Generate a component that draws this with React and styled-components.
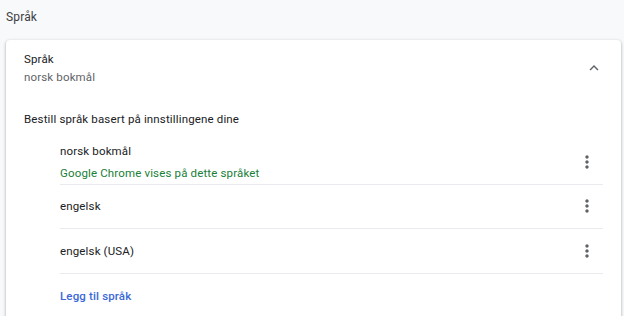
import React from 'react'
import styled, {createGlobalStyle} from 'styled-components'

const GlobalStyle = createGlobalStyle`
    html, body {
        margin: 0;
        padding: 0;
        background-color: #f8f9fa;
        font-family: Roboto, "Liberation Sans", sans-serif;
        font-size: 11.5px;
        letter-spacing: 0.15px;
        color: #202124;
        overflow: hidden;
    }
`

const Page = styled.div`
    width: 624px;
    height: 316px;
    padding: 0 3px 0 6px;
    box-sizing: border-box;
`

const PageTitle = styled.h2`
    margin: 0;
    height: 40px;
    display: flex;
    align-items: center;
    padding-bottom: 6px;
    box-sizing: border-box;
    font-size: 12px;
    font-weight: 400;
    color: #3c4043;
`

const Card = styled.div`
    background-color: #fff;
    border-radius: 4px;
    box-shadow: 0 1px 2px rgba(60, 64, 67, 0.3), 0 1px 3px 1px rgba(60, 64, 67, 0.15);
    padding-bottom: 20px;
`

const Header = styled.div`
    display: flex;
    align-items: center;
    height: 56px;
    padding: 0 13px 0 18px;
`

const HeaderText = styled.div`
    flex: 1;
    display: flex;
    flex-direction: column;
    gap: 4px;
`

const Secondary = styled.span`
    color: #5f6368;
`

const IconButton = styled.button`
    width: ${(p) => p.size || 28}px;
    height: 28px;
    border: none;
    background: none;
    padding: 0;
    display: flex;
    align-items: center;
    justify-content: center;
    color: #5f6368;
    cursor: pointer;
`

const SectionLabel = styled.div`
    padding: 8px 18px 0;
    height: 30px;
    display: flex;
    align-items: center;
    box-sizing: content-box;
`

const List = styled.div`
    margin: 6px 18px 0 54px;
`

const Row = styled.div`
    display: flex;
    align-items: center;
    min-height: 43.5px;
    border-bottom: 1px solid #e8eaed;
`

const RowText = styled.div`
    flex: 1;
    display: flex;
    flex-direction: column;
    gap: 8px;
`

const Note = styled.span`
    color: #188038;
`

const AddLink = styled.a`
    display: block;
    padding-top: 15px;
    font-weight: 500;
    color: #3b68d9;
    text-decoration: none;
`

const Chevron = () => (
    <svg width="18" height="18" viewBox="0 0 24 24" fill="currentColor">
        <path d="M7.41 15.41L12 10.83l4.59 4.58L18 14l-6-6-6 6z" />
    </svg>
)

const Kebab = () => (
    <svg width="20" height="20" viewBox="0 0 24 24" fill="currentColor">
        <path d="M12 8c1.1 0 2-.9 2-2s-.9-2-2-2-2 .9-2 2 .9 2 2 2zm0 2c-1.1 0-2 .9-2 2s.9 2 2 2 2-.9 2-2-.9-2-2-2zm0 6c-1.1 0-2 .9-2 2s.9 2 2 2 2-.9 2-2-.9-2-2-2z" />
    </svg>
)

const languages = [
    {name: 'norsk bokmål', note: 'Google Chrome vises på dette språket'},
    {name: 'engelsk'},
    {name: 'engelsk (USA)'},
]

const App = () => {
    return (
        <Page>
            <GlobalStyle />
            <PageTitle>Språk</PageTitle>
            <Card>
                <Header>
                    <HeaderText>
                        <span>Språk</span>
                        <Secondary>norsk bokmål</Secondary>
                    </HeaderText>
                    <IconButton><Chevron /></IconButton>
                </Header>
                <SectionLabel>Bestill språk basert på innstillingene dine</SectionLabel>
                <List>
                    {languages.map((l) => (
                        <Row key={l.name}>
                            <RowText>
                                <span>{l.name}</span>
                                {l.note && <Note>{l.note}</Note>}
                            </RowText>
                            <IconButton size={32}><Kebab /></IconButton>
                        </Row>
                    ))}
                    <AddLink href="#">Legg til språk</AddLink>
                </List>
            </Card>
        </Page>
    )
}

export default App
